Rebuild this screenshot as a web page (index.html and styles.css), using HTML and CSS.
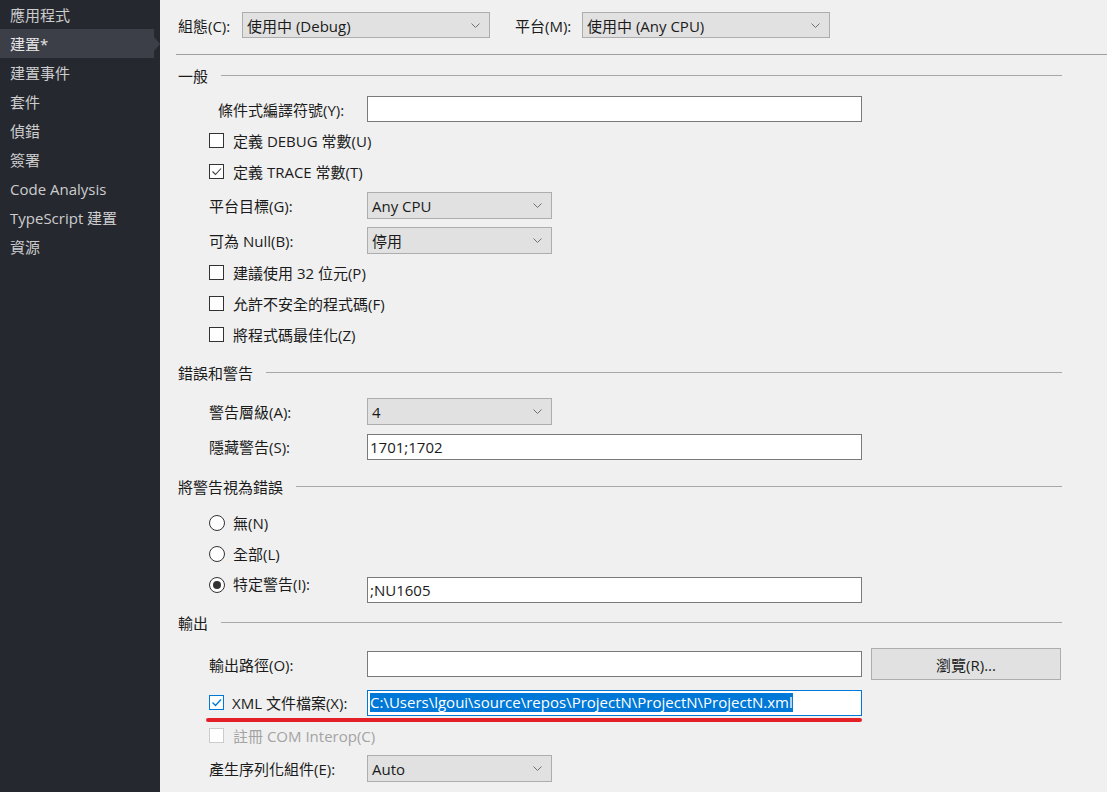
FILE: index.html
```html
<!DOCTYPE html>
<html lang="zh-Hant">
<head>
<meta charset="utf-8">
<title>建置</title>
<link rel="stylesheet" href="styles.css">
</head>
<body>
<div class="app">
  <nav class="sidebar">
    <div class="nav-item">應用程式</div>
    <div class="nav-item selected">建置*</div>
    <div class="nav-item">建置事件</div>
    <div class="nav-item">套件</div>
    <div class="nav-item">偵錯</div>
    <div class="nav-item">簽署</div>
    <div class="nav-item">Code Analysis</div>
    <div class="nav-item">TypeScript 建置</div>
    <div class="nav-item">資源</div>
  </nav>

  <main class="main">
    <div class="toprow">
      <span class="top-label cfg">組態(C):</span>
      <div class="select wide"><span>使用中 (Debug)</span><svg class="chev" width="9" height="5" viewBox="0 0 9 5"><path d="M0.5 0.5 L4.5 4.5 L8.5 0.5" fill="none" stroke="#707070" stroke-width="1"/></svg></div>
      <span class="top-label plat">平台(M):</span>
      <div class="select wide"><span>使用中 (Any CPU)</span><svg class="chev" width="9" height="5" viewBox="0 0 9 5"><path d="M0.5 0.5 L4.5 4.5 L8.5 0.5" fill="none" stroke="#707070" stroke-width="1"/></svg></div>
    </div>
    <div class="divider"></div>

    <div class="sec-head first"><span>一般</span><i class="rule"></i></div>
    <div class="row field tight">
      <span class="label indent">條件式編譯符號(Y):</span>
      <div class="textbox"></div>
    </div>
    <div class="row check after-field">
      <span class="cb"></span><span>定義 DEBUG 常數(U)</span>
    </div>
    <div class="row check">
      <span class="cb"><svg width="13" height="13" viewBox="0 0 13 13"><path d="M2.5 6.5 L5.5 9.5 L11 3.5" fill="none" stroke="#3a3a3a" stroke-width="1.1"/></svg></span><span>定義 TRACE 常數(T)</span>
    </div>
    <div class="row field">
      <span class="label">平台目標(G):</span>
      <div class="select short"><span>Any CPU</span><svg class="chev" width="9" height="5" viewBox="0 0 9 5"><path d="M0.5 0.5 L4.5 4.5 L8.5 0.5" fill="none" stroke="#707070" stroke-width="1"/></svg></div>
    </div>
    <div class="row field">
      <span class="label">可為 Null(B):</span>
      <div class="select short"><span>停用</span><svg class="chev" width="9" height="5" viewBox="0 0 9 5"><path d="M0.5 0.5 L4.5 4.5 L8.5 0.5" fill="none" stroke="#707070" stroke-width="1"/></svg></div>
    </div>
    <div class="row check after-field">
      <span class="cb"></span><span>建議使用 32 位元(P)</span>
    </div>
    <div class="row check">
      <span class="cb"></span><span>允許不安全的程式碼(F)</span>
    </div>
    <div class="row check">
      <span class="cb"></span><span>將程式碼最佳化(Z)</span>
    </div>

    <div class="sec-head"><span>錯誤和警告</span><i class="rule"></i></div>
    <div class="row field">
      <span class="label">警告層級(A):</span>
      <div class="select short"><span>4</span><svg class="chev" width="9" height="5" viewBox="0 0 9 5"><path d="M0.5 0.5 L4.5 4.5 L8.5 0.5" fill="none" stroke="#707070" stroke-width="1"/></svg></div>
    </div>
    <div class="row field">
      <span class="label">隱藏警告(S):</span>
      <div class="textbox"><span>1701;1702</span></div>
    </div>

    <div class="sec-head"><span>將警告視為錯誤</span><i class="rule"></i></div>
    <div class="row check">
      <span class="radio"></span><span>無(N)</span>
    </div>
    <div class="row check">
      <span class="radio"></span><span>全部(L)</span>
    </div>
    <div class="row check specific">
      <span class="radio on"><i></i></span><span class="radio-label">特定警告(I):</span>
      <div class="textbox"><span>;NU1605</span></div>
    </div>

    <div class="sec-head"><span>輸出</span><i class="rule"></i></div>
    <div class="row output">
      <span class="label">輸出路徑(O):</span>
      <div class="textbox"></div>
      <div class="button">瀏覽(R)...</div>
    </div>
    <div class="row field xml">
      <span class="label cb-label"><span class="cb blue"><svg width="13" height="13" viewBox="0 0 13 13"><path d="M2.5 6.5 L5.5 9.5 L11 3.5" fill="none" stroke="#0078d7" stroke-width="1.3"/></svg></span><span>XML 文件檔案(X):</span></span>
      <div class="textbox focused"><span class="sel">C:\Users\lgoui\source\repos\ProjectN\ProjectN\ProjectN.xml</span></div>
      <i class="redmark"></i>
    </div>
    <div class="row com">
      <span class="cb disabled"></span><span class="muted">註冊 COM Interop(C)</span>
    </div>
    <div class="row field com-next">
      <span class="label">產生序列化組件(E):</span>
      <div class="select short"><span>Auto</span><svg class="chev" width="9" height="5" viewBox="0 0 9 5"><path d="M0.5 0.5 L4.5 4.5 L8.5 0.5" fill="none" stroke="#707070" stroke-width="1"/></svg></div>
    </div>
  </main>
</div>
</body>
</html>
```

FILE: styles.css
```css
* { box-sizing: border-box; }
html, body { margin: 0; padding: 0; }
body {
  width: 1107px;
  height: 792px;
  overflow: hidden;
  background: #f0f0f0;
  font-family: "Open Sans", "Noto Sans CJK TC", sans-serif;
  font-size: 15px;
  color: #1b1b1b;
}
.app {
  display: flex;
  height: 792px;
}

/* Sidebar */
.sidebar {
  width: 160px;
  flex: none;
  background: #262830;
}
.nav-item {
  position: relative;
  width: 154px;
  height: 29px;
  display: flex;
  align-items: center;
  padding-left: 10px;
  color: #cdcdcd;
  font-size: 15px;
  white-space: nowrap;
}
.nav-item.selected {
  background: #3c3f47;
  color: #e6e6e6;
}
.nav-item.selected::after {
  content: "";
  position: absolute;
  right: -6px;
  top: 8px;
  border-left: 6px solid #3c3f47;
  border-top: 7px solid transparent;
  border-bottom: 7px solid transparent;
}

/* Main */
.main {
  flex: 1;
  padding-left: 16px;
  display: flex;
  flex-direction: column;
}
.toprow {
  display: flex;
  align-items: center;
  height: 26px;
  margin-top: 12px;
  padding-left: 2px;
}
.top-label { white-space: nowrap; }
.top-label.cfg { width: 64px; }
.top-label.plat { width: 67px; margin-left: 25px; }
.divider {
  height: 1px;
  background: #a0a0a0;
  margin-top: 16px;
}

.sec-head {
  display: flex;
  align-items: center;
  height: 20px;
  margin-top: 12px;
  margin-right: 45px;
  padding-left: 2px;
}
.sec-head.first { margin-top: 10px; }
.field + .sec-head { margin-top: 16px; }
.sec-head .rule {
  flex: 1;
  height: 1px;
  background: #a8a8a8;
  margin-left: 13px;
}

.row {
  display: flex;
  align-items: center;
  padding-left: 33px;
  white-space: nowrap;
}
.label {
  width: 158px;
  flex: none;
}
.label.indent { padding-left: 9px; }

.field { height: 27px; margin-top: 8px; }
.sec-head + .field { margin-top: 16px; }
.sec-head + .field.tight { margin-top: 11px; height: 26px; }
.check { height: 31px; }
.sec-head + .check { margin-top: 11px; }
.check.after-field { margin-top: 3px; }
.check + .field { margin-top: 5px; }

.select {
  height: 27px;
  background: #e1e1e1;
  border: 1px solid #adadad;
  display: flex;
  align-items: center;
  padding-left: 4px;
  padding-right: 9px;
  justify-content: space-between;
}
.select.wide { width: 248px; height: 26px; }
.select.short { width: 185px; }
.chev { flex: none; }

.textbox {
  width: 495px;
  height: 26px;
  background: #ffffff;
  border: 1px solid #7a7a7a;
  display: flex;
  align-items: center;
  padding-left: 2px;
}

.cb {
  width: 15px;
  height: 15px;
  flex: none;
  background: #fff;
  border: 1px solid #333;
  margin-right: 9px;
  display: flex;
  align-items: center;
  justify-content: center;
}
.cb svg { display: block; }
.cb.blue { border-color: #0078d7; }
.cb.disabled { border-color: #cccccc; }
.muted { color: #a3a3a3; }

.radio {
  width: 16px;
  height: 16px;
  flex: none;
  border-radius: 50%;
  background: #fff;
  border: 1px solid #333;
  margin-right: 8px;
  display: flex;
  align-items: center;
  justify-content: center;
}
.radio.on i {
  width: 8px;
  height: 8px;
  border-radius: 50%;
  background: #333;
}
.check.specific { align-items: flex-start; }
.check.specific .radio { margin-top: 7.5px; }
.check.specific .radio-label { width: 134px; line-height: 31px; }
.check.specific .textbox { margin-top: 8px; }

.output { height: 32px; margin-top: 16px; }
.button {
  width: 190px;
  height: 32px;
  margin-left: 9px;
  background: #e1e1e1;
  border: 1px solid #adadad;
  display: flex;
  align-items: center;
  justify-content: center;
}
.field.xml { margin-top: 9px; position: relative; }
.cb-label { display: flex; align-items: center; }
.cb-label .cb { margin-right: 8px; }
.textbox.focused { border-color: #0078d7; }
.sel {
  background: #0078d7;
  color: #ffffff;
  line-height: 19px;
}
.redmark {
  position: absolute;
  left: 30px;
  top: 29px;
  width: 656px;
  height: 4px;
  border-radius: 2px;
  background: #e32027;
}
.com { height: 24px; margin-top: 7px; }
.field.com-next { margin-top: 8px; }
```
